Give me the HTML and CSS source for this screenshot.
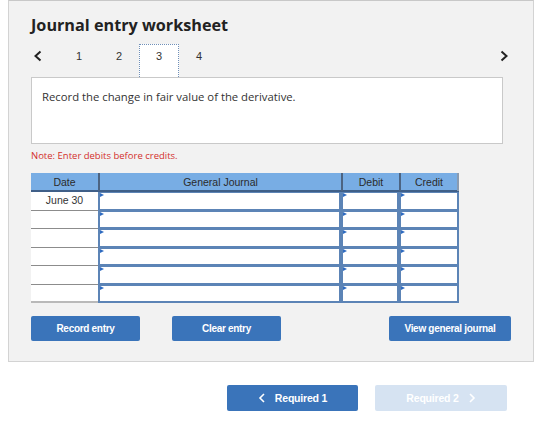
FILE: index.html
```html
<!DOCTYPE html>
<html lang="en">
<head>
  <meta charset="UTF-8" />
  <title>Journal entry worksheet</title>
  <link rel="stylesheet" href="styles.css">
</head>
<body>
  <div class="panel">
    <h1 class="title">Journal entry worksheet</h1>

    <div class="tabs">
      <span class="nav prev">
        <svg width="10" height="12" viewBox="0 0 10 12"><path d="M7.5 1.5 L2.5 6 L7.5 10.5" fill="none" stroke="#222" stroke-width="2"/></svg>
      </span>
      <span class="tab">1</span>
      <span class="tab">2</span>
      <span class="tab current">3</span>
      <span class="tab">4</span>
      <span class="nav next">
        <svg width="10" height="12" viewBox="0 0 10 12"><path d="M2.5 1.5 L7.5 6 L2.5 10.5" fill="none" stroke="#222" stroke-width="2"/></svg>
      </span>
    </div>

    <div class="prompt">Record the change in fair value of the derivative.</div>
    <div class="note">Note: Enter debits before credits.</div>

    <div class="journal">
      <div class="head">
        <div class="hcell">Date</div>
        <div class="hcell">General Journal</div>
        <div class="hcell">Debit</div>
        <div class="hcell">Credit</div>
      </div>
      <div class="row">
        <div class="date">June 30</div>
        <div class="field"></div>
        <div class="field"></div>
        <div class="field"></div>
      </div>
      <div class="row">
        <div class="date"></div>
        <div class="field"></div>
        <div class="field"></div>
        <div class="field"></div>
      </div>
      <div class="row">
        <div class="date"></div>
        <div class="field"></div>
        <div class="field"></div>
        <div class="field"></div>
      </div>
      <div class="row">
        <div class="date"></div>
        <div class="field"></div>
        <div class="field"></div>
        <div class="field"></div>
      </div>
      <div class="row">
        <div class="date"></div>
        <div class="field"></div>
        <div class="field"></div>
        <div class="field"></div>
      </div>
      <div class="row">
        <div class="date"></div>
        <div class="field"></div>
        <div class="field"></div>
        <div class="field"></div>
      </div>
    </div>

    <div class="actions">
      <button class="btn">Record entry</button>
      <button class="btn clear">Clear entry</button>
      <button class="btn view">View general journal</button>
    </div>
  </div>

  <div class="steps">
    <button class="step">
      <svg width="8" height="10" viewBox="0 0 8 10"><path d="M6 1 L2 5 L6 9" fill="none" stroke="#fff" stroke-width="1.6"/></svg>
      Required 1
    </button>
    <button class="step off">
      Required 2
      <svg width="8" height="10" viewBox="0 0 8 10"><path d="M2 1 L6 5 L2 9" fill="none" stroke="#fff" stroke-width="1.6"/></svg>
    </button>
  </div>
</body>
</html>
```

FILE: styles.css
```css
body {
  margin: 0;
  background: #fff;
  font-family: "Liberation Sans", Arial, sans-serif;
  color: #333;
}
.panel {
  margin-left: 8px;
  width: 526px;
  height: 362px;
  box-sizing: border-box;
  background: #f2f2f2;
  border: 1px solid #d3d3d3;
  border-top-color: #c8c8c8;
  padding: 14px 0 0 22px;
}
.title {
  margin: 0;
  font-family: "Open Sans", sans-serif;
  font-size: 16.2px;
  font-weight: 700;
  color: #222;
  line-height: 20px;
}
.tabs {
  display: flex;
  align-items: flex-start;
  height: 33px;
  margin-top: 9px;
  width: 478px;
}
.nav {
  display: flex;
  align-items: center;
  height: 24px;
}
.prev {
  width: 28px;
  padding-left: 2px;
  box-sizing: border-box;
}
.next {
  margin-left: auto;
}
.tab {
  width: 40px;
  height: 33px;
  box-sizing: border-box;
  text-align: center;
  font-size: 11px;
  line-height: 24px;
  color: #333;
}
.current {
  background: #fff;
  border: 1px dotted #6f8fb8;
  border-bottom: none;
  line-height: 22px;
}
.prompt {
  width: 472px;
  height: 67px;
  box-sizing: border-box;
  background: #fff;
  border: 1px solid #c9c9c9;
  padding: 11px 10px;
  font-family: "Open Sans", sans-serif;
  font-size: 11.3px;
  color: #333;
}
.note {
  margin-top: 5px;
  font-family: "Open Sans", sans-serif;
  font-size: 9.5px;
  color: #d2302c;
}
.journal {
  margin-top: 11px;
  width: 428px;
}
.head, .row {
  display: grid;
  grid-template-columns: 67px 243px 58px 60px;
}
.head {
  background: #78ade4;
  height: 19px;
  border-bottom: 2px solid #3f5f88;
  box-sizing: border-box;
}
.hcell {
  font-size: 10.5px;
  line-height: 18px;
  text-align: center;
  color: #2b2b2b;
  border-left: 2px solid #4c6482;
}
.hcell:first-child {
  border-left: none;
}
.hcell:last-child {
  border-right: 2px solid #8a9bb0;
}
.row {
  height: 18.5px;
}
.date {
  background: #fff;
  border-bottom: 1px solid #8c8c8c;
  font-size: 10.5px;
  line-height: 17px;
  text-align: center;
  color: #333;
}
.row:last-child .date {
  border-bottom: 2px solid #b9b9b9;
}
.field {
  position: relative;
  background: #fff;
  border: 2px solid #5c84b6;
  border-top-width: 1px;
  box-sizing: border-box;
}
.field::before {
  content: "";
  position: absolute;
  left: 0;
  top: 0;
  border-left: 4px solid #2f6bc0;
  border-top: 2.5px solid transparent;
  border-bottom: 2.5px solid transparent;
}
.actions {
  display: flex;
  margin-top: 13px;
  width: 480px;
}
.btn {
  width: 109px;
  height: 25px;
  background: #3a74ba;
  color: #fff;
  border: none;
  border-radius: 2px;
  font-family: "Liberation Sans", Arial, sans-serif;
  font-size: 10px;
  font-weight: 700;
  letter-spacing: -0.3px;
  padding: 0;
}
.clear {
  margin-left: 32px;
}
.view {
  width: 122px;
  margin-left: auto;
}
.steps {
  display: flex;
  gap: 17px;
  margin: 23px 0 0 227px;
}
.step {
  display: flex;
  align-items: center;
  justify-content: center;
  gap: 9px;
  width: 131px;
  height: 26px;
  background: #3a74ba;
  color: #fff;
  border: none;
  border-radius: 2px;
  font-family: "Liberation Sans", Arial, sans-serif;
  font-size: 10.5px;
  font-weight: 700;
  letter-spacing: -0.2px;
  padding: 0;
}
.off {
  background: #d6e3f2;
  width: 132px;
}
```
